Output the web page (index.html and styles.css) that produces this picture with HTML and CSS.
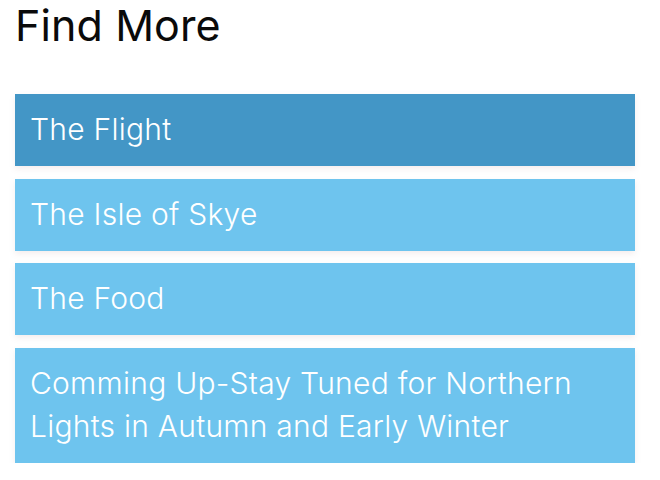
FILE: index.html
```html
<!DOCTYPE html>
<html lang="en">
<head>
<meta charset="utf-8">
<title>Find More</title>
<link rel="stylesheet" href="styles.css">
</head>
<body>
<section class="find-more">
  <h2 class="title">Find More</h2>
  <ul class="links">
    <li class="link active">The Flight</li>
    <li class="link">The Isle of Skye</li>
    <li class="link">The Food</li>
    <li class="link">Comming Up-Stay Tuned for Northern Lights in Autumn and Early Winter</li>
  </ul>
</section>
</body>
</html>
```
FILE: styles.css
```css
html, body {
  margin: 0;
  padding: 0;
  background: #ffffff;
}
body {
  font-family: Inter, "Open Sans", sans-serif;
}
.find-more {
  padding: 0 25px 0 15px;
}
.title {
  margin: 0 0 44px;
  font-size: 43px;
  line-height: 50px;
  font-weight: 400;
  color: #0a0a0a;
  letter-spacing: 0.1px;
}
.links {
  list-style: none;
  margin: 0;
  padding: 0;
  display: flex;
  flex-direction: column;
  gap: 12.5px;
}
.link {
  background: #6ec4ee;
  color: #ffffff;
  font-size: 30px;
  font-weight: 300;
  line-height: 43px;
  letter-spacing: 0.25px;
  padding: 14px 50px 15px 15px;
  box-shadow: 0 3px 6px rgba(170, 120, 120, 0.13);
}
.link.active {
  background: #4396c6;
}
```
